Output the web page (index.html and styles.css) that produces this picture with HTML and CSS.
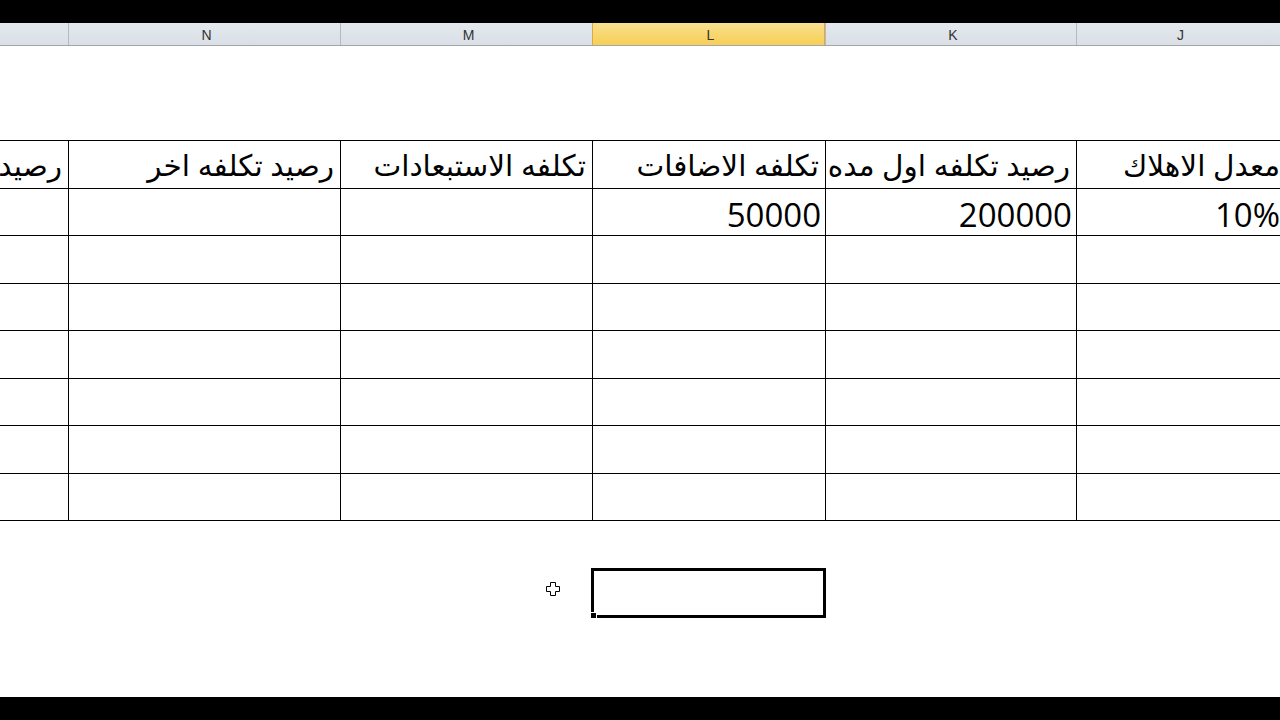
FILE: index.html
```html
<!DOCTYPE html>
<html lang="ar">
<head>
<meta charset="utf-8">
<title>Sheet</title>
<link rel="stylesheet" href="styles.css">
</head>
<body>
<div class="screen">
  <div class="bar"></div>
  <div class="colheads">
    <div class="ch">J</div>
    <div class="ch">K</div>
    <div class="ch ch-sel">L</div>
    <div class="ch">M</div>
    <div class="ch">N</div>
    <div class="ch ch-last"></div>
  </div>
  <div class="sheet">
    <div class="blank-rows"></div>
    <div class="table">
      <div class="row head">
        <div class="cell">معدل الاهلاك</div>
        <div class="cell">رصيد تكلفه اول مده</div>
        <div class="cell">تكلفه الاضافات</div>
        <div class="cell">تكلفه الاستبعادات</div>
        <div class="cell">رصيد تكلفه اخر</div>
        <div class="cell last">رصيد</div>
      </div>
      <div class="row">
        <div class="cell num">10%</div>
        <div class="cell num">200000</div>
        <div class="cell num">50000</div>
        <div class="cell"></div>
        <div class="cell"></div>
        <div class="cell last"></div>
      </div>
      <div class="row"><div class="cell"></div><div class="cell"></div><div class="cell"></div><div class="cell"></div><div class="cell"></div><div class="cell last"></div></div>
      <div class="row"><div class="cell"></div><div class="cell"></div><div class="cell"></div><div class="cell"></div><div class="cell"></div><div class="cell last"></div></div>
      <div class="row"><div class="cell"></div><div class="cell"></div><div class="cell"></div><div class="cell"></div><div class="cell"></div><div class="cell last"></div></div>
      <div class="row"><div class="cell"></div><div class="cell"></div><div class="cell"></div><div class="cell"></div><div class="cell"></div><div class="cell last"></div></div>
      <div class="row"><div class="cell"></div><div class="cell"></div><div class="cell"></div><div class="cell"></div><div class="cell"></div><div class="cell last"></div></div>
      <div class="row"><div class="cell"></div><div class="cell"></div><div class="cell"></div><div class="cell"></div><div class="cell"></div><div class="cell last"></div></div>
    </div>
    <div class="gap-row"></div>
    <div class="sel-row">
      <div></div>
      <div></div>
      <div class="selected"><span class="handle"></span></div>
      <div class="cursor-cell">
        <svg class="cursor" width="14" height="14" viewBox="0 0 14 14">
          <path d="M4.5 0.5h5v4h4v5h-4v4h-5v-4h-4v-5h4z" fill="#fff" stroke="#000" stroke-width="1"/>
        </svg>
      </div>
      <div></div>
      <div></div>
    </div>
  </div>
  <div class="bar bottom"></div>
</div>
</body>
</html>
```
FILE: styles.css
```css
html, body {
  margin: 0;
  padding: 0;
  background: #000;
}
.screen {
  width: 1280px;
  height: 720px;
  display: flex;
  flex-direction: column;
  overflow: hidden;
  background: #fff;
}
.bar {
  height: 23px;
  background: #000;
  flex: none;
}
.colheads {
  direction: rtl;
  display: grid;
  grid-template-columns: 204px 251px 233px 252px 272px 68px;
  height: 22px;
  flex: none;
  background: linear-gradient(#e4e8ee, #dadfe6);
  border-bottom: 1px solid #9ea6b0;
}
.ch {
  border-left: 1px solid #b4bac3;
  font-family: "Liberation Sans", "DejaVu Sans", sans-serif;
  font-size: 14px;
  color: #333;
  display: flex;
  align-items: center;
  justify-content: center;
  padding-top: 1px;
  padding-left: 4px;
}
.ch-last { border-left: none; }
.ch-sel {
  background: linear-gradient(#f9df8f, #f7cf55);
  border-left: 1px solid #e1a83a;
  border-right: 1px solid #e1a83a;
}
.sheet {
  flex: 1;
  direction: rtl;
  position: relative;
}
.blank-rows {
  height: 94px;
}
.table {
  border-top: 1px solid #000;
}
.row {
  display: grid;
  grid-template-columns: 204px 251px 233px 252px 272px 68px;
  height: 47.5px;
  box-sizing: border-box;
  border-bottom: 1px solid #000;
}
.cell {
  border-left: 1px solid #000;
  display: flex;
  align-items: flex-end;
  justify-content: flex-start;
  padding: 0 6px 3px 0;
  font-family: "Open Sans", "DejaVu Sans", sans-serif;
  font-size: 29.5px;
  line-height: 1.2;
  color: #000;
  white-space: nowrap;
  overflow: visible;
  min-width: 0;
}
.row .cell:first-child { padding-right: 0; }
.cell.last { border-left: none; }
.head .cell { padding-bottom: 5px; }
.cell.num {
  font-size: 33px;
  padding-bottom: 0;
  padding-right: 4px;
}
.row .cell.num:first-child { padding-right: 0; }
.gap-row {
  height: 47px;
}
.sel-row {
  display: grid;
  grid-template-columns: 204px 250px 235px 252px 272px 67px;
  height: 50px;
}
.selected {
  border: 3px solid #000;
  position: relative;
}
.handle {
  position: absolute;
  left: -4px;
  bottom: -4px;
  width: 5px;
  height: 5px;
  background: #000;
  border: 1px solid #fff;
}
.cursor-cell {
  position: relative;
}
.cursor {
  position: absolute;
  left: 207px;
  top: 14px;
}
```
